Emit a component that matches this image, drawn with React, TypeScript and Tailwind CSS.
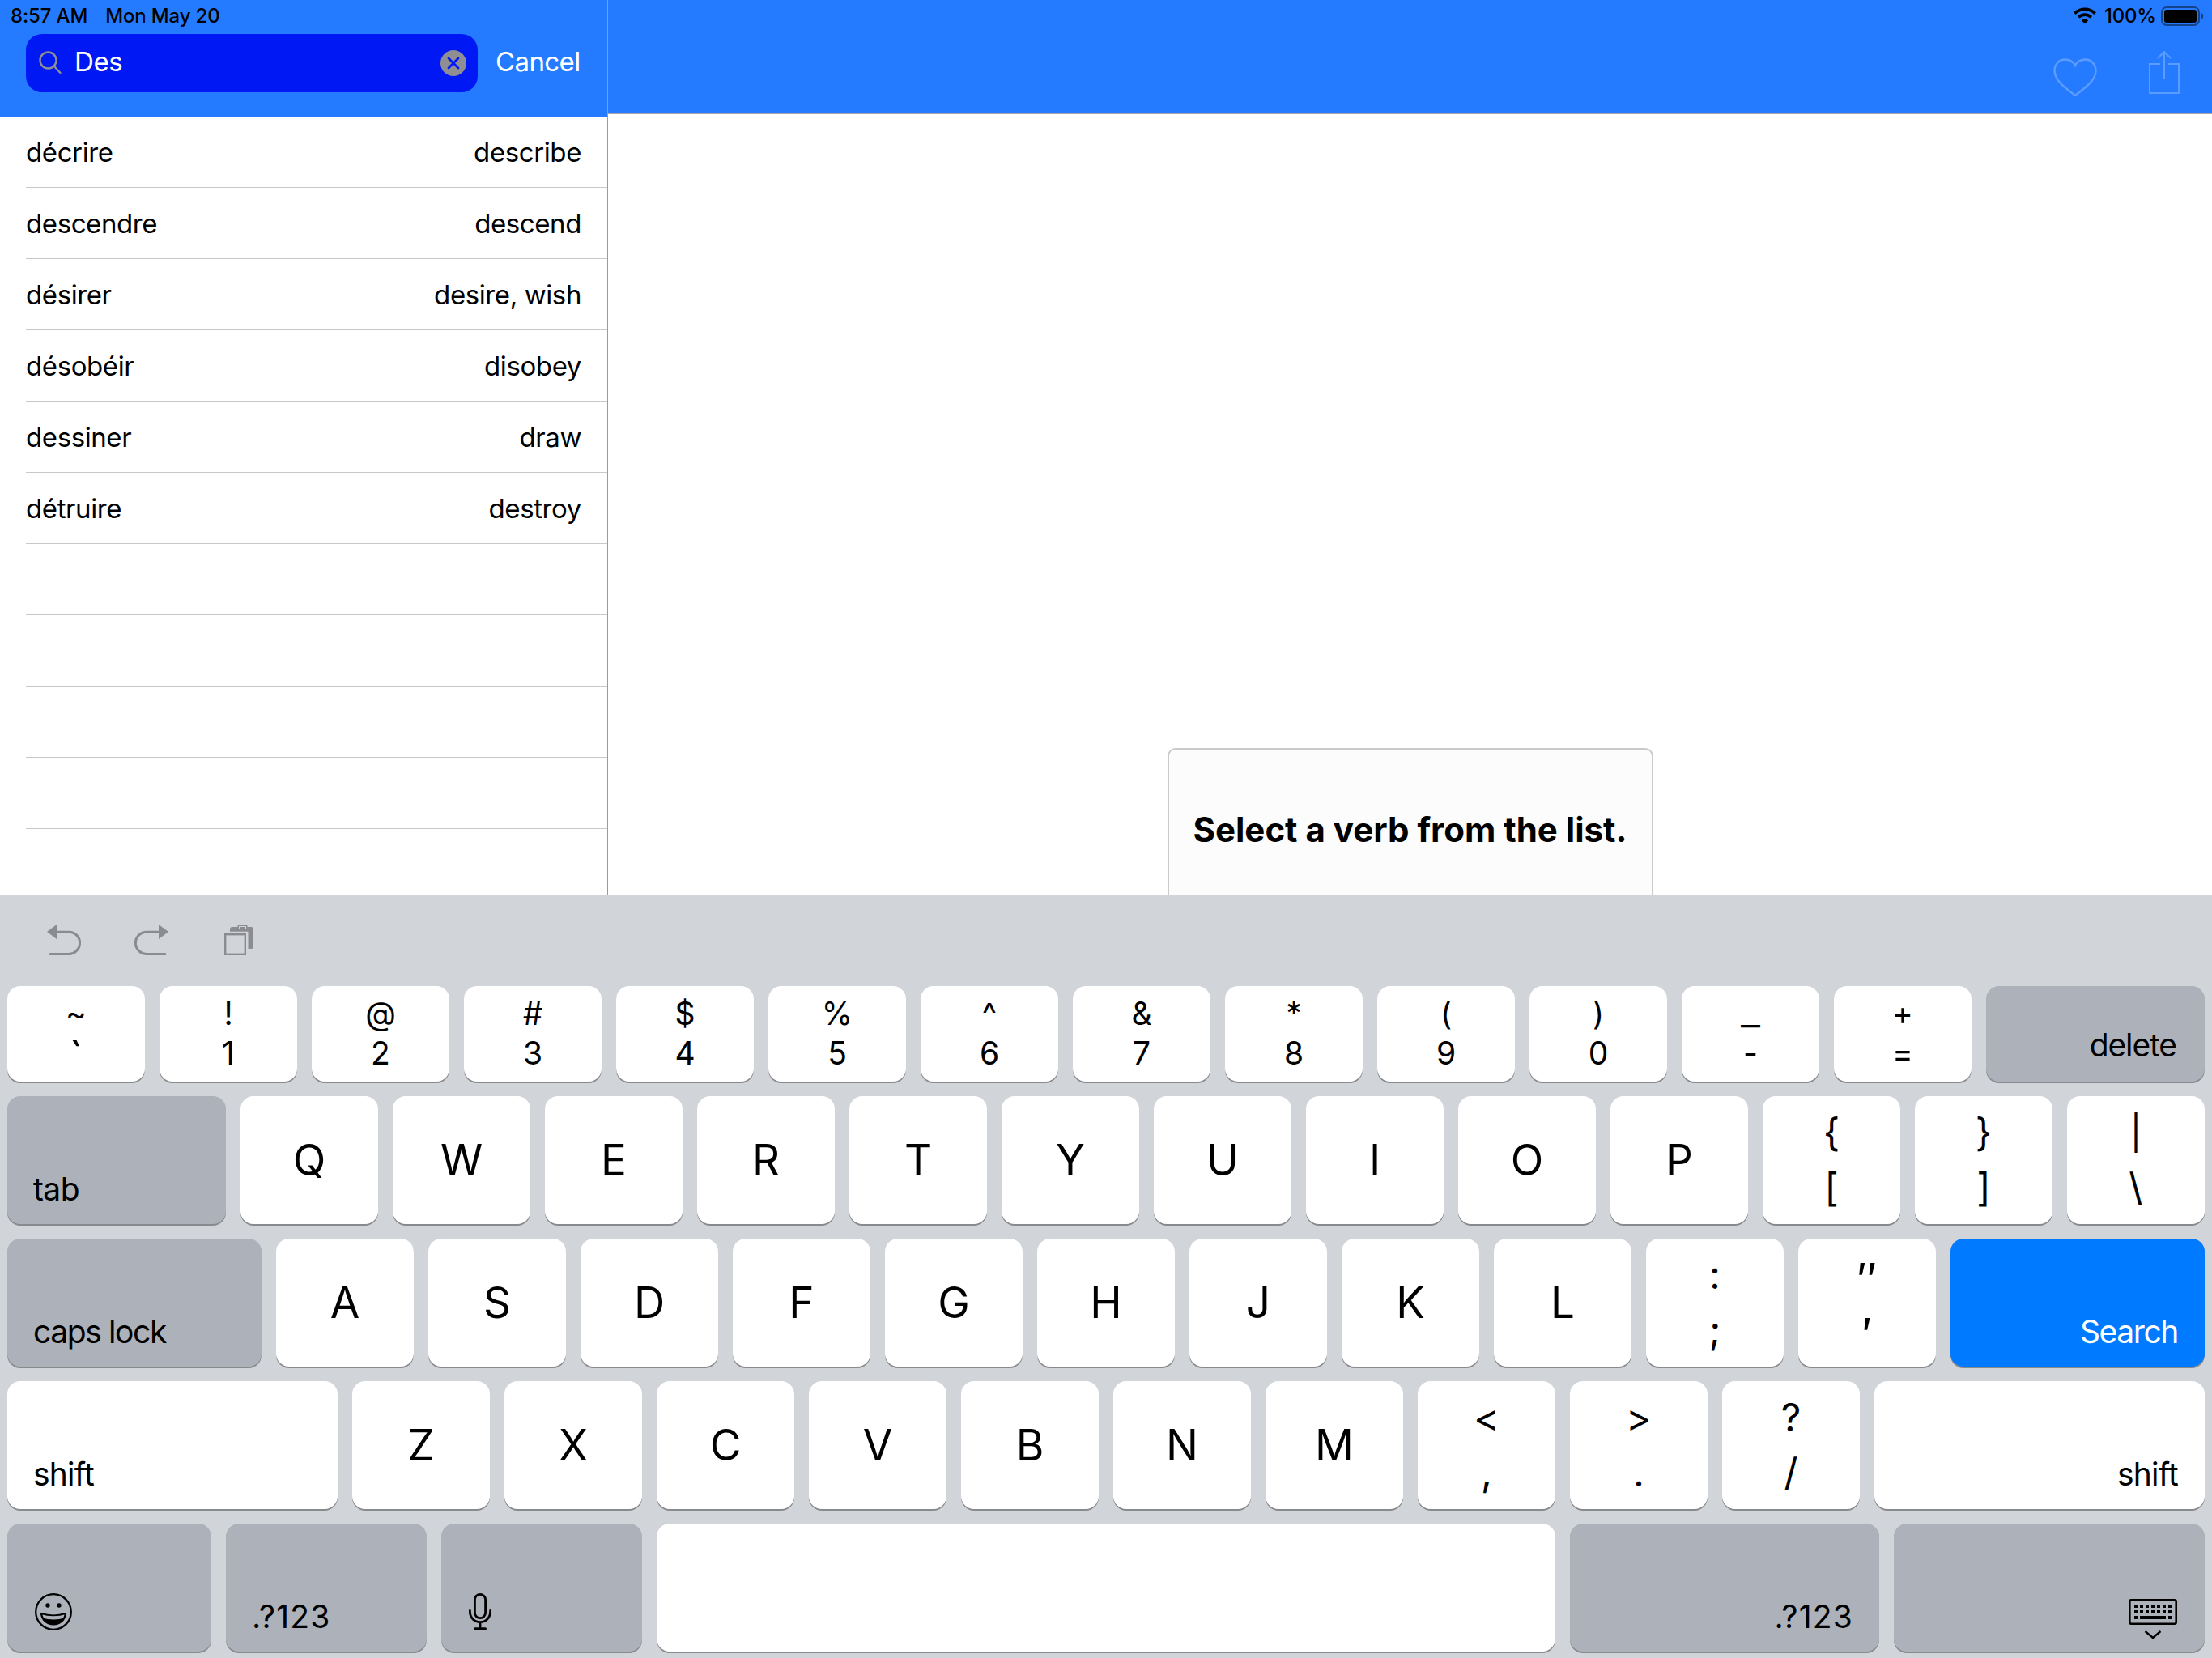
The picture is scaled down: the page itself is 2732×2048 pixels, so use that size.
import React from 'react';
import clsx from 'clsx';

type KeyProps = {
  className?: string;
  children?: React.ReactNode;
};

const verbs = [
  { fr: 'décrire', en: 'describe' },
  { fr: 'descendre', en: 'descend' },
  { fr: 'désirer', en: 'desire, wish' },
  { fr: 'désobéir', en: 'disobey' },
  { fr: 'dessiner', en: 'draw' },
  { fr: 'détruire', en: 'destroy' },
];

const numberRow = [
  ['~', '`'],
  ['!', '1'],
  ['@', '2'],
  ['#', '3'],
  ['$', '4'],
  ['%', '5'],
  ['^', '6'],
  ['&', '7'],
  ['*', '8'],
  ['(', '9'],
  [')', '0'],
  ['_', '-'],
  ['+', '='],
];

function Key({ className, children }: KeyProps) {
  return (
    <button
      className={clsx(
        'flex h-full shrink-0 rounded-[16px] shadow-[0_2px_0_#898a8d]',
        className
      )}
    >
      {children}
    </button>
  );
}

function LetterKey({ label }: { label: string }) {
  return (
    <Key className="w-[170px] items-center justify-center bg-white text-[53px] leading-none tracking-normal">
      {label}
    </Key>
  );
}

function NumberKey({ top, bottom }: { top: string; bottom: string }) {
  return (
    <Key className="w-[170px] flex-col items-center bg-white pt-[10px] text-[39px] leading-[48px] tracking-normal">
      <span className={clsx(top === '_' && 'scale-x-[1.35]')}>{top}</span>
      <span className={clsx(bottom === '`' ? 'pt-[5px] text-[50px]' : 'pt-[1px]')}>{bottom}</span>
    </Key>
  );
}

function SymbolKey({ top, bottom, className }: { top: string; bottom: string; className?: string }) {
  return (
    <Key
      className={clsx(
        'w-[170px] flex-col items-center bg-white tracking-normal',
        className || 'pt-[11px] text-[48px]'
      )}
    >
      <span className={clsx('leading-[68px]', top === '|' && 'text-[42px]')}>{top}</span>
      <span className="leading-[68px]">{bottom}</span>
    </Key>
  );
}

function StatusIcons() {
  return (
    <div className="flex items-center pb-[1px]">
      <svg width="28" height="22" viewBox="0 0 28 22" className="mr-[10px]">
        <path d="M14 20.5l-4.2-4.2a6 6 0 0 1 8.4 0z" fill="#000" />
        <path d="M6.2 12.3a11.2 11.2 0 0 1 15.6 0" fill="none" stroke="#000" strokeWidth="3.6" />
        <path d="M1.4 7.6a18 18 0 0 1 25.2 0" fill="none" stroke="#000" strokeWidth="3.8" />
      </svg>
      <span className="mr-[6px] text-[24px] leading-none font-medium tracking-[-0.2px]">100%</span>
      <svg width="54" height="24" viewBox="0 0 54 24">
        <rect x="1" y="1" width="46" height="22" rx="6" fill="none" stroke="#000" strokeOpacity=".45" strokeWidth="2" />
        <rect x="4" y="4" width="40" height="16" rx="3" fill="#000" />
        <path d="M50 8c3 1 3 7 0 8z" fill="#000" fillOpacity=".45" />
      </svg>
    </div>
  );
}

function Sidebar() {
  return (
    <aside className="flex h-full w-[751px] shrink-0 flex-col border-r border-[#9b9b9f] bg-white">
      <div className="h-[145px] shrink-0 border-b border-[#a9a9ae] bg-[#257bff]">
        <div className="flex h-[42px] items-center gap-[22px] pb-[3px] pl-[13px] text-[24px] leading-none font-medium tracking-[-0.15px]">
          <span>8:57 AM</span>
          <span>Mon May 20</span>
        </div>
        <div className="flex items-center pl-8">
          <div className="flex h-[72px] w-[558px] items-center rounded-[20px] bg-[#0018f4] pr-[14px] pl-[16px]">
            <svg width="30" height="30" viewBox="0 0 30 30" fill="none" stroke="#8e8e93" strokeWidth="2.4" strokeLinecap="round">
              <circle cx="11.5" cy="11.5" r="10" />
              <path d="M18.5 18.500l8 8.500" />
            </svg>
            <span className="ml-[14px] flex-1 pb-[3px] text-[33px] leading-none tracking-[-0.4px] text-white">Des</span>
            <svg width="32" height="32" viewBox="0 0 32 32">
              <circle cx="16" cy="16" r="16" fill="#8e8e93" />
              <path d="M10 10l12 12M22 10l-12 12" stroke="#0018f4" strokeWidth="2.8" strokeLinecap="round" />
            </svg>
          </div>
          <span className="ml-[22px] pb-[3px] text-[33px] leading-none tracking-[-0.6px] text-white">Cancel</span>
        </div>
      </div>
      <ul>
        {verbs.map((verb) => (
          <li
            key={verb.fr}
            className="ml-8 flex h-[88px] items-center justify-between border-b border-[#c8c7cc] pt-[2px] pr-8 text-[33px] tracking-[-0.4px] first:h-[87px]"
          >
            <span>{verb.fr}</span>
            <span>{verb.en}</span>
          </li>
        ))}
        {[0, 1, 2, 3].map((i) => (
          <li key={i} className="ml-8 h-[88px] border-b border-[#c8c7cc]" />
        ))}
      </ul>
    </aside>
  );
}

function Detail() {
  return (
    <main className="flex h-full flex-1 flex-col items-center">
      <header className="h-[141px] w-full shrink-0 border-b border-[#a9a9ae] bg-[#257bff]">
        <div className="flex h-[40px] items-center justify-end pr-[9px]">
          <StatusIcons />
        </div>
        <div className="flex items-start justify-end gap-[64px] pt-[23px] pr-[40px]">
          <svg width="54" height="48" viewBox="0 0 54 48" fill="none" stroke="#5c9cff" strokeWidth="2.4" className="mt-[9px]">
            <path d="M27 46C20 40 1.5 29 1.5 15.500C1.500 7 7.500 1.500 14.500 1.500C20 1.500 24.500 4 27 9C29.500 4 34 1.500 39.500 1.500C46.500 1.500 52.500 7 52.500 15.500C52.500 29 34 40 27 46Z" />
          </svg>
          <svg width="38" height="54" viewBox="0 0 38 54" fill="none" stroke="#5c9cff" strokeWidth="2">
            <path d="M14 16H1v36h36V16H24M19 34V1.500M11 9l8-8 8 8" />
          </svg>
        </div>
      </header>
      <div className="mt-[783px] flex h-[204px] w-[600px] shrink-0 justify-center rounded-[10px] border-2 border-[#cacaca] bg-[#fcfcfc] pt-[71px] text-[42px] leading-[56px] font-bold whitespace-nowrap">
        Select a verb from the list.
      </div>
    </main>
  );
}

function EditBar() {
  return (
    <div className="flex h-[112px] items-start pt-[36px] pl-[58px] text-[#8b8c8f]">
      <svg width="43" height="39" viewBox="0 0 43 39" fill="none" stroke="currentColor" strokeWidth="3" strokeLinecap="round">
        <path d="M10 9.200h17a13.600 13.600 0 0 1 0 27.200H4" />
        <path d="M0 9L12 0v18z" fill="currentColor" stroke="none" />
      </svg>
      <svg width="43" height="39" viewBox="0 0 43 39" fill="none" stroke="currentColor" strokeWidth="3" strokeLinecap="round" className="ml-[64px]">
        <path d="M33 9.200H16a13.600 13.600 0 0 0 0 27.200H39" />
        <path d="M43 9L31 0v18z" fill="currentColor" stroke="none" />
      </svg>
      <svg width="37" height="39" viewBox="0 0 37 39" fill="none" stroke="currentColor" className="ml-[69px]">
        <rect x="1.200" y="12.200" width="24.600" height="24.600" strokeWidth="2.400" />
        <path d="M7 8.700V6q0-3 3-3h23q3 0 3 3v21q0 3-3 3h-3.500V8.700z" fill="currentColor" stroke="none" />
        <rect x="16.500" y=".500" width="12" height="5.500" fill="currentColor" stroke="none" />
        <rect x="18.500" y="2.500" width="8" height="3" stroke="#d1d4d9" strokeWidth="1" />
      </svg>
    </div>
  );
}

function EmojiIcon() {
  return (
    <svg width="46" height="46" viewBox="0 0 46 46">
      <circle cx="23" cy="23" r="21.800" fill="none" stroke="#000" strokeWidth="2.300" />
      <circle cx="16" cy="15" r="2.700" />
      <circle cx="30" cy="15" r="2.700" />
      <path d="M8 25c9 3 21 3 30 0c-1 8-7 13.500-15 13.500S9 33 8 25z" fill="none" stroke="#000" strokeWidth="2.200" strokeLinejoin="round" />
      <path d="M9.500 30.500c8 2.500 19 2.500 27 0c-2 5-7 8.500-13.500 8.500s-11.500-3.500-13.500-8.500z" />
    </svg>
  );
}

function MicIcon() {
  return (
    <svg width="28" height="47" viewBox="0 0 28 47" fill="none" stroke="#000" strokeWidth="2.800" strokeLinecap="round">
      <rect x="7.400" y="2.400" width="13.200" height="29.200" rx="6.600" />
      <path d="M1.400 22.500v1.500a12.600 12.600 0 0 0 25.200 0v-1.500M14 37v7" />
      <path d="M7.500 44.800h13" strokeWidth="3" />
    </svg>
  );
}

function HideKeyboardIcon() {
  return (
    <svg width="60" height="49" viewBox="0 0 60 49">
      <rect x="1.300" y="1.300" width="57.400" height="40.400" rx="2" fill="none" stroke="none" />
      <rect x="1.300" y="1.300" width="57.400" height="29.400" rx="2" fill="none" stroke="#000" strokeWidth="2.600" />
      <path d="M7 9h48M7 16h48" stroke="#000" strokeWidth="4" strokeDasharray="4 3" />
      <path d="M7 23h4M14 23h32M49 23h4" stroke="#000" strokeWidth="4" />
      <path d="M20.500 40l9.500 8 9.500-8" fill="none" stroke="#000" strokeWidth="2.400" />
    </svg>
  );
}

function Keyboard() {
  return (
    <div className="h-[942px] bg-[#d1d4d9]">
      <EditBar />
      <div className="flex flex-col gap-[18px] px-[9px] text-[39px] leading-none tracking-[-1.2px]">
        <div className="flex h-[118px] gap-[18px]">
          {numberRow.map(([top, bottom]) => (
            <NumberKey key={bottom} top={top} bottom={bottom} />
          ))}
          <Key className="w-[270px] items-end justify-end bg-[#adb1ba] pr-[35px] pb-[26px] tracking-[-1.1px]">delete</Key>
        </div>
        <div className="flex h-[158px] gap-[18px]">
          <Key className="w-[270px] items-end bg-[#adb1ba] pb-[24px] pl-[32px] tracking-[-0.6px]">tab</Key>
          {'QWERTYUIOP'.split('').map((l) => (
            <LetterKey key={l} label={l} />
          ))}
          <SymbolKey top="{" bottom="[" />
          <SymbolKey top="}" bottom="]" />
          <SymbolKey top="|" bottom="\" />
        </div>
        <div className="flex h-[158px] gap-[18px]">
          <Key className="w-[314px] items-end bg-[#adb1ba] pb-[24px] pl-[32px] tracking-[-1.4px]">caps lock</Key>
          {'ASDFGHJKL'.split('').map((l) => (
            <LetterKey key={l} label={l} />
          ))}
          <SymbolKey top=":" bottom=";" />
          <SymbolKey top="″" bottom="′" className="pt-[17px] text-[56px]" />
          <Key className="w-[314px] items-end justify-end bg-[#007aff] pr-[33px] pb-[24px] tracking-[-1.4px] text-white">Search</Key>
        </div>
        <div className="flex h-[158px] gap-[18px]">
          <Key className="w-[408px] items-end bg-white pb-[24px] pl-[32px] tracking-[-0.8px]">shift</Key>
          {'ZXCVBNM'.split('').map((l) => (
            <LetterKey key={l} label={l} />
          ))}
          <SymbolKey top="<" bottom="," />
          <SymbolKey top=">" bottom="." />
          <SymbolKey top="?" bottom="/" />
          <Key className="w-[408px] items-end justify-end bg-white pr-[33px] pb-[24px] tracking-[-0.8px]">shift</Key>
        </div>
        <div className="flex h-[158px] gap-[18px]">
          <Key className="w-[252px] items-end bg-[#adb1ba] pb-[26px] pl-[34px]">
            <EmojiIcon />
          </Key>
          <Key className="w-[248px] items-end bg-[#adb1ba] pb-[24px] pl-[32px] tracking-[1.2px]">.?123</Key>
          <Key className="w-[248px] items-end bg-[#adb1ba] pb-[26px] pl-[34px]">
            <MicIcon />
          </Key>
          <Key className="w-[1110px] bg-white" />
          <Key className="w-[382px] items-end justify-end bg-[#adb1ba] pr-[32px] pb-[24px] tracking-[1.2px]">.?123</Key>
          <Key className="w-[384px] items-end justify-end bg-[#adb1ba] pr-[34px] pb-[16px]">
            <HideKeyboardIcon />
          </Key>
        </div>
      </div>
    </div>
  );
}

export default function App() {
  return (
    <div className="h-[2048px] w-[2732px] overflow-hidden bg-white font-['Inter',sans-serif] text-black">
      <div className="flex h-[1106px] overflow-hidden">
        <Sidebar />
        <Detail />
      </div>
      <Keyboard />
    </div>
  );
}
